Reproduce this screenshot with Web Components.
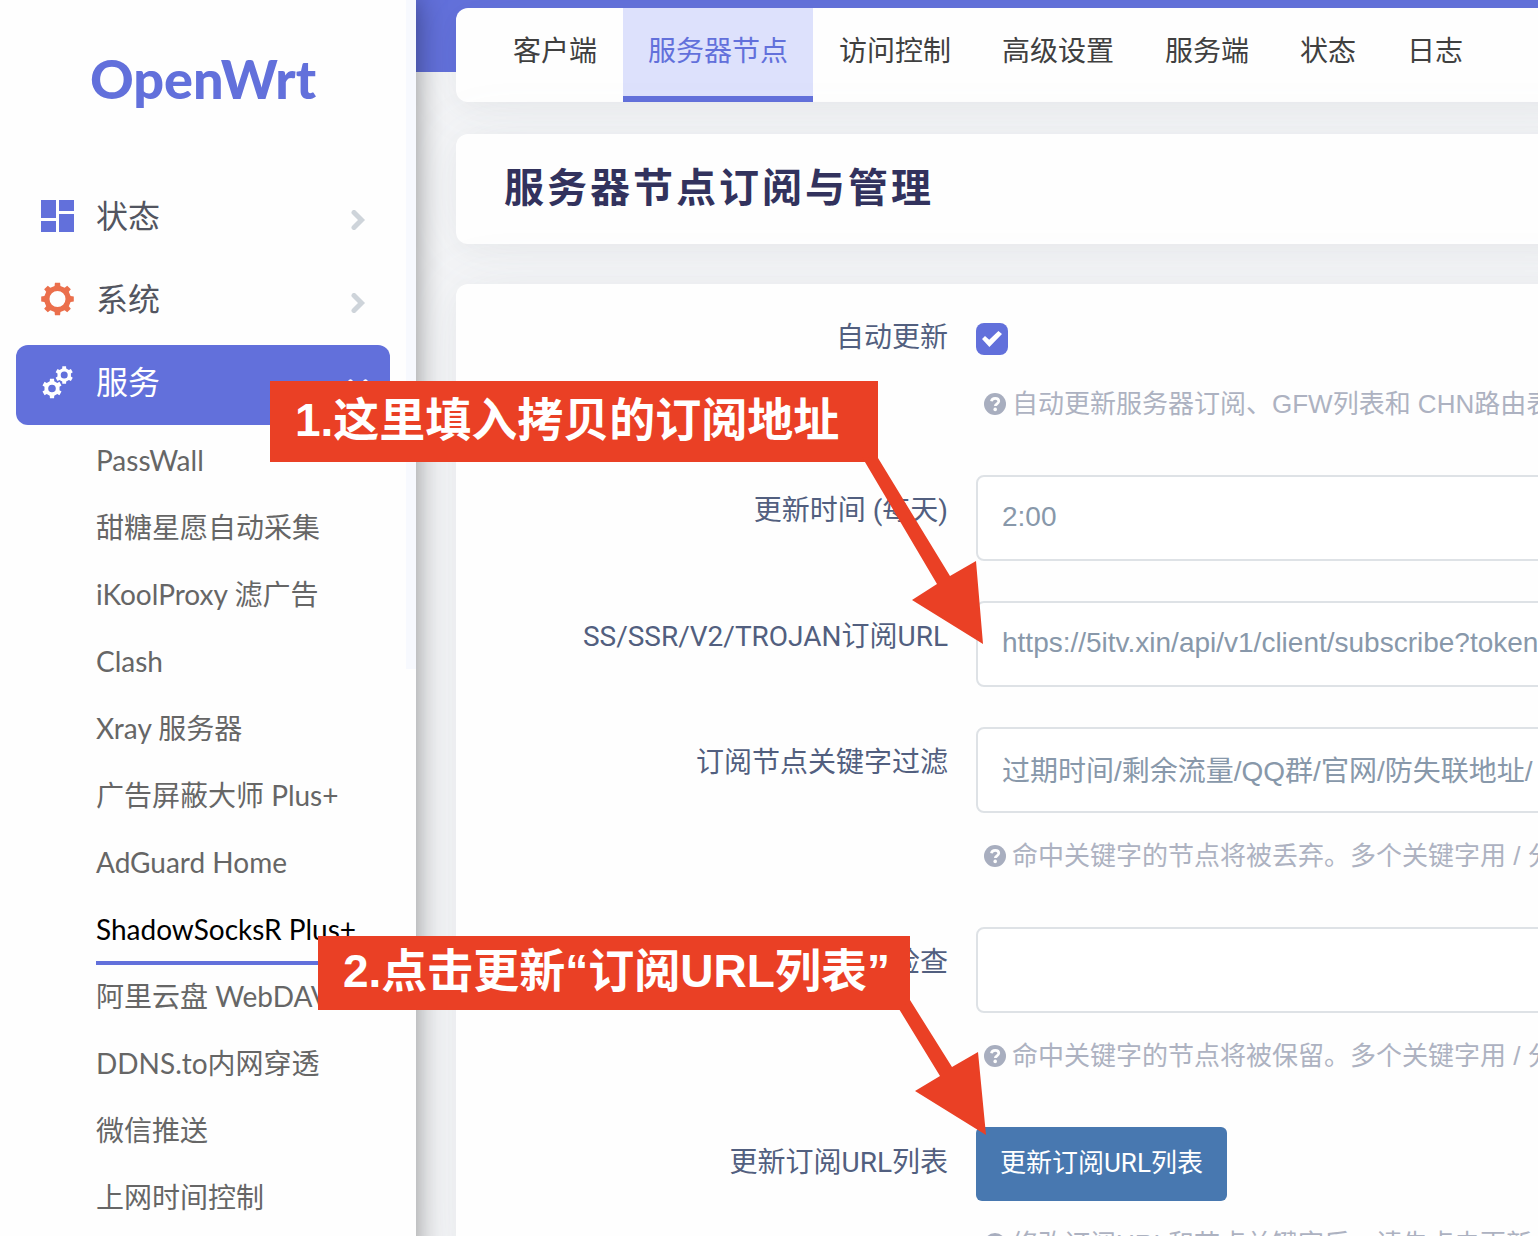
<!DOCTYPE html>
<html lang="zh-CN">
<head>
<meta charset="utf-8">
<title>OpenWrt - ShadowSocksR Plus+</title>
<style>
  :root {
    --primary: #6270db;
    --primary-soft: #dde1fc;
    --surface: #fefefe;
    --line: #dee2e6;
    --callout: #ea4025;
    --text-font: "Liberation Sans", "Noto Sans CJK SC", sans-serif;
    --label-font: Roboto, "Noto Sans CJK SC", sans-serif;
  }
  * { box-sizing: border-box; }
  body {
    margin: 0;
    height: 100vh;
    overflow: hidden;
    background: #f4f5f7;
    font-family: Lato, "Noto Sans CJK SC", sans-serif;
    font-size: 28px;
  }
</style>
</head>
<body>
<ow-app>
  <ow-sidebar slot="side">
    <ow-group icon="grid" label="状态"></ow-group>
    <ow-group icon="cog" label="系统"></ow-group>
    <ow-group icon="cogs" label="服务" open>
      <ow-link>PassWall</ow-link>
      <ow-link>甜糖星愿自动采集</ow-link>
      <ow-link>iKoolProxy 滤广告</ow-link>
      <ow-link>Clash</ow-link>
      <ow-link>Xray 服务器</ow-link>
      <ow-link>广告屏蔽大师 Plus+</ow-link>
      <ow-link>AdGuard Home</ow-link>
      <ow-link active>ShadowSocksR Plus+</ow-link>
      <ow-link>阿里云盘 WebDAV</ow-link>
      <ow-link>DDNS.to内网穿透</ow-link>
      <ow-link>微信推送</ow-link>
      <ow-link>上网时间控制</ow-link>
    </ow-group>
  </ow-sidebar>
  <ow-card class="tabs">
    <ow-tabs>
      <ow-tab>客户端</ow-tab>
      <ow-tab active>服务器节点</ow-tab>
      <ow-tab>访问控制</ow-tab>
      <ow-tab>高级设置</ow-tab>
      <ow-tab>服务端</ow-tab>
      <ow-tab>状态</ow-tab>
      <ow-tab>日志</ow-tab>
    </ow-tabs>
  </ow-card>
  <ow-card class="title"><ow-title>服务器节点订阅与管理</ow-title></ow-card>
  <ow-card class="form">
    <ow-form>
      <ow-field type="checkbox" label="自动更新" help="自动更新服务器订阅、GFW列表和 CHN路由表"></ow-field>
      <ow-field type="text" label="更新时间 (每天)" value="2:00"></ow-field>
      <ow-field type="text" label="SS/SSR/V2/TROJAN订阅URL" value="https://5itv.xin/api/v1/client/subscribe?token"></ow-field>
      <ow-field type="text" label="订阅节点关键字过滤" value="过期时间/剩余流量/QQ群/官网/防失联地址/" help="命中关键字的节点将被丢弃。多个关键字用 / 分"></ow-field>
      <ow-field type="text" label="检查" value="" help="命中关键字的节点将被保留。多个关键字用 / 分"></ow-field>
      <ow-field type="button" label="更新订阅URL列表" value="更新订阅URL列表" help="修改订阅URL和节点关键字后，请先点击更新"></ow-field>
    </ow-form>
  </ow-card>
  <ow-callout slot="notes" style="left:270px;top:381px;--w:608px;--h:81px" points="592,76 608,77 680,195 706,180 713,263 642,219 667,203">1.这里填入拷贝的订阅地址</ow-callout>
  <ow-callout slot="notes" style="left:318px;top:936px;--w:592px;--h:74px" points="581,73 592,64 634,131 660,116 668,199 597,155 622,140">2.点击更新“订阅URL列表”</ow-callout>
</ow-app>

<script>
const define = (name, markup, setup) => {
  const template = document.createElement('template');
  template.innerHTML = '<style>*{box-sizing:border-box}[hidden]{display:none!important}</style>' + markup;
  customElements.define(name, class extends HTMLElement {
    connectedCallback() {
      if (this.shadowRoot) return;
      const root = this.attachShadow({ mode: 'open' });
      root.append(template.content.cloneNode(true));
      if (setup) setup(this, root);
    }
  });
};

/* Outline of a cog with n flat-topped teeth around (cx, cy), plus its round hole. */
const cog = (cx, cy, n, outer, inner, hole, turn) => {
  const step = 2 * Math.PI / n;
  const at = (r, a) => (cx + r * Math.cos(a)).toFixed(2) + ' ' + (cy + r * Math.sin(a)).toFixed(2);
  const points = [];
  for (let i = 0; i < n; i++) {
    const a = turn + i * step;
    points.push(at(inner, a - step * 0.28), at(outer, a - step * 0.2), at(outer, a + step * 0.2), at(inner, a + step * 0.28));
  }
  return 'M' + points.join('L') + 'Z' +
    `M${cx - hole} ${cy}a${hole} ${hole} 0 1 0 ${hole * 2} 0a${hole} ${hole} 0 1 0 ${-hole * 2} 0Z`;
};

const icons = {
  grid: '<path fill="#6270db" d="M0 0h15v18H0zM18 0h15v11H18zM0 21h15v11H0zM18 14h15v18H18z"/>',
  cog: `<path fill="#eb6f4c" fill-rule="evenodd" d="${cog(16.5, 16, 8, 16.5, 13.4, 8, 0)}"/>`,
  cogs: `<path fill="#fff" fill-rule="evenodd" d="${cog(11, 22.5, 6, 10, 7.7, 3.8, Math.PI / 6)}${cog(23.2, 9, 6, 9, 6.900, 3.500, Math.PI / 6)}"/>`
};

define('ow-app', `
  <style>
    :host { display: flex; height: 100%; overflow: hidden; position: relative; }
    main {
      flex: 1; min-width: 0; display: flex; flex-direction: column; gap: 40px;
      padding: 8px 0 0 40px; overflow: hidden;
      background: linear-gradient(var(--primary) 72px, transparent 72px);
    }
    ::slotted(ow-card) { margin-right: -64px; }
    ::slotted(.tabs) { margin-bottom: -8px; }
    ::slotted(.form) { flex: 1 0 auto; }
  </style>
  <slot name="side"></slot>
  <main><slot></slot></main>
  <slot name="notes"></slot>
`);

define('ow-sidebar', `
  <style>
    :host {
      display: flex; flex: 0 0 416px; height: calc(100% + 40px);
      position: relative; z-index: 1; background: var(--surface);
      box-shadow: 0 0 28px rgba(0, 0, 0, .42);
    }
    .body { flex: 1; min-width: 0; padding: 0 16px; overflow: hidden; }
    .rail { flex: 0 0 10px; height: 669px; background: #f7f9fe; }
    h1 {
      margin: 0; height: 179px; padding-top: 43px; text-align: center;
      font: 900 54px/72px Lato, sans-serif; color: var(--primary);
    }
    nav { display: flex; flex-direction: column; gap: 3px; }
  </style>
  <div class="body">
    <h1>OpenWrt</h1>
    <nav><slot></slot></nav>
  </div>
  <div class="rail"></div>
`);

define('ow-group', `
  <style>
    :host { display: block; }
    button {
      display: flex; align-items: center; width: 100%; height: 80px;
      padding: 0 22px 6px 25px; border: 0; border-radius: 12px; background: none;
      font: inherit; font-size: 32px; color: #525560; text-align: left;
    }
    .icon { width: 33px; height: 32px; margin-right: 22px; overflow: visible; }
    .name { flex: 1; padding-bottom: 4px; }
    .chevron { width: 20px; height: 20px; margin-top: 8px; color: #ced4da; }
    :host([open]) button { background: var(--primary); color: #fff; }
    :host([open]) .chevron { color: #fff; transform: rotate(90deg); }
    .items { padding: 4px 0 0 80px; }
  </style>
  <button type="button">
    <svg class="icon" viewBox="0 0 33 32" aria-hidden="true"></svg>
    <span class="name"></span>
    <svg class="chevron" viewBox="0 0 20 20" aria-hidden="true">
      <path d="M6 2.500l7.500 7.500-7.500 7.500" fill="none" stroke="currentColor" stroke-width="5" stroke-linecap="round"/>
    </svg>
  </button>
  <div class="items"><slot></slot></div>
`, (host, root) => {
  root.querySelector('.icon').innerHTML = icons[host.getAttribute('icon')];
  root.querySelector('.name').textContent = host.getAttribute('label');
  root.querySelector('.items').hidden = !host.hasAttribute('open');
  root.querySelector('button').setAttribute('aria-expanded', host.hasAttribute('open'));
});

define('ow-link', `
  <style>
    :host { display: block; }
    a {
      display: inline-block; height: 67px; line-height: 63px; border-bottom: 4px solid transparent;
      color: #666; text-decoration: none; white-space: nowrap; vertical-align: top;
    }
    :host([active]) a { color: #000; border-color: var(--primary); }
  </style>
  <a href="#"><slot></slot></a>
`);

define('ow-card', `
  <style>
    :host {
      display: block; background: var(--surface); border-radius: 12px;
      box-shadow: 0 0 64px rgba(136, 152, 170, .08), 0 6px 24px rgba(0, 0, 0, .03);
    }
  </style>
  <slot></slot>
`);

define('ow-tabs', `
  <style>:host { display: flex; gap: 1px; padding-left: 32px; }</style>
  <slot></slot>
`);

define('ow-tab', `
  <style>
    :host { display: block; }
    a {
      display: block; padding: 0 25px; height: 94px; line-height: 84px;
      border-bottom: 6px solid transparent; color: #404040; text-decoration: none; white-space: nowrap;
    }
    :host([active]) a { color: var(--primary); background: var(--primary-soft); border-color: var(--primary); }
  </style>
  <a href="#"><slot></slot></a>
`);

define('ow-title', `
  <style>
    :host { display: block; padding: 22px 48px 26px; }
    h2 { margin: 0; font-size: 40px; line-height: 62px; font-weight: 700; letter-spacing: 3px; color: #32325d; white-space: nowrap; }
  </style>
  <h2><slot></slot></h2>
`);

define('ow-form', `
  <style>:host { display: flex; flex-direction: column; gap: 40px; padding-top: 18px; }</style>
  <slot></slot>
`);

define('ow-field', `
  <style>
    :host { display: flex; gap: 28px; align-items: flex-start; }
    label {
      flex: 0 0 492px; padding-top: 14px; font-family: var(--label-font); line-height: 44px;
      text-align: right; color: #525f7f; white-space: nowrap;
    }
    .control { flex: 1; min-width: 0; }
    input[type=text] {
      display: block; width: 100%; height: 86px; padding: 0 0 2px 24px;
      border: 2px solid var(--line); border-radius: 8px;
      background: #fff; font: inherit; font-family: var(--text-font); color: #8898aa; outline: 0;
    }
    .check { padding: 21px 0 6px; }
    input[type=checkbox] {
      appearance: none; display: grid; place-items: center; width: 32px; height: 32px; margin: 0;
      border-radius: 8px; background: var(--primary);
    }
    input[type=checkbox]::before {
      content: ""; width: 20px; height: 16px; background: #fff;
      clip-path: polygon(0 50%, 15% 31%, 36% 55%, 82% 0, 100% 19%, 37% 100%);
    }
    button {
      display: block; height: 74px; padding: 0 24px 8px; border: 0; border-radius: 6px;
      background: #4878b0; font: inherit; font-family: var(--label-font); font-size: 26px; color: #fff; white-space: nowrap;
    }
    .help {
      display: flex; align-items: center; gap: 6px; padding: 24px 0 12px 8px; height: 74px;
      font-family: var(--text-font); font-size: 26px; line-height: 38px; color: #adb2c1; white-space: nowrap;
    }
    .help svg { flex: none; width: 22px; height: 22px; }
  </style>
  <label for="control"></label>
  <div class="control">
    <div class="slot"></div>
    <div class="help">
      <svg viewBox="0 0 22 22" aria-hidden="true">
        <circle cx="11" cy="11" r="11" fill="#a8aebf"/>
        <path d="M7.4 8.2C7.8 6.2 9.300 5.300 11.200 5.300c2.100 0 3.600 1.200 3.600 3 0 2.400-3.500 2.500-3.500 4.700" fill="none" stroke="#fefefe" stroke-width="2.700"/>
        <circle cx="11.200" cy="16.400" r="1.800" fill="#fefefe"/>
      </svg>
      <span></span>
    </div>
  </div>
`, (host, root) => {
  const type = host.getAttribute('type');
  const help = host.getAttribute('help');
  const control = document.createElement(type === 'button' ? 'button' : 'input');
  control.id = 'control';
  control.type = type;
  if (type === 'button') control.textContent = host.getAttribute('value');
  if (type === 'text') control.value = host.getAttribute('value');
  if (type === 'checkbox') {
    control.checked = true;
    root.querySelector('.slot').classList.add('check');
  }
  root.querySelector('.slot').append(control);
  root.querySelector('label').textContent = host.getAttribute('label');
  root.querySelector('.help').hidden = !help;
  root.querySelector('.help span').textContent = help || '';
});

define('ow-callout', `
  <style>
    :host { position: absolute; z-index: 2; display: block; width: var(--w); height: var(--h); }
    svg { position: absolute; left: 0; top: 0; width: 1px; height: 1px; overflow: visible; }
    p {
      display: flex; align-items: center; height: 100%; margin: 0; padding: 0 25px 4px; background: var(--callout);
      font: 700 46px/60px "Liberation Sans", "Noto Sans CJK SC", sans-serif; color: #fff; white-space: nowrap;
    }
  </style>
  <svg aria-hidden="true"><polygon fill="#ea4025"/></svg>
  <p><slot></slot></p>
`, (host, root) => {
  root.querySelector('polygon').setAttribute('points', host.getAttribute('points'));
});
</script>
</body>
</html>
